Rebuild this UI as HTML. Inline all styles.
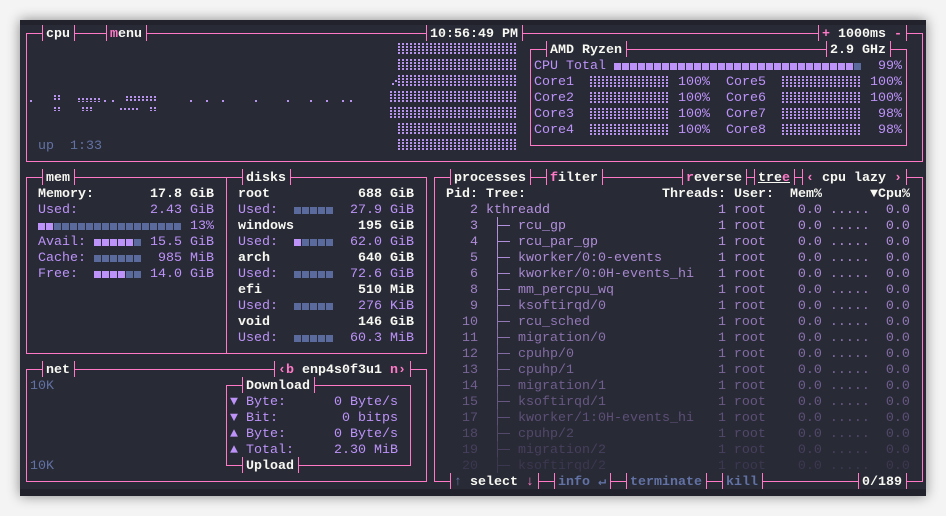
<!DOCTYPE html>
<html><head><meta charset="utf-8"><style>
*{margin:0;padding:0;box-sizing:border-box}
body{width:946px;height:516px;background:#f4f4f4;position:relative;overflow:hidden}
#t{position:absolute;left:20px;top:20px;width:906px;height:476px;background:#21222c;box-shadow:0 0 12px rgba(0,0,0,.45)}
#g{position:absolute;left:20px;top:25px;width:906px;height:464px;background:#282a36}
i{position:absolute;font-style:normal;white-space:pre;font-family:"Liberation Mono","DejaVu Sans Mono",monospace;font-size:13.33px;line-height:16px;height:16px;color:#bd93f9;transform:translateY(2px)}
.w{color:#f8f8f2;font-weight:bold}
.p{color:#ff79c6}
.d{color:#6272a4}
.bx{position:absolute;border:1px solid #ff79c6}
.lb{position:absolute;height:16px;border-left:1px solid #ff79c6;border-right:1px solid #ff79c6;background:#282a36;padding-left:3px;white-space:pre;font-family:"Liberation Mono","DejaVu Sans Mono",monospace;font-size:13.33px;line-height:20px;font-weight:bold;color:#f8f8f2}
.sq{position:absolute;height:12px}
.sq b{display:inline-block;width:7px;height:7px;margin-right:1px;background:#5b6a9c;vertical-align:top;margin-top:3px}
.sq b.v{background:#bd93f9}
.br{position:absolute;height:12px;background:linear-gradient(0deg,#282a36 1px,transparent 1px) 0 0/4px 3px,linear-gradient(90deg,#b893ee 2px,transparent 2px) 0 0/4px 3px}
.dt{position:absolute;width:2px;height:2px;background:#b893ee}
.vl{position:absolute;width:1px;height:16px}
.hl{position:absolute;height:1px;width:13px}
</style></head><body>
<div id="t"></div><div id="g"></div>

<!-- boxes -->
<div class="bx" style="left:26px;top:33px;width:897px;height:129px"></div>
<div class="bx" style="left:530px;top:49px;width:377px;height:97px"></div>
<div class="bx" style="left:26px;top:177px;width:401px;height:177px"></div>
<div style="position:absolute;left:226px;top:177px;width:1px;height:177px;background:#ff79c6"></div>
<div class="bx" style="left:434px;top:177px;width:489px;height:305px"></div>
<div class="bx" style="left:26px;top:369px;width:401px;height:113px"></div>
<div class="bx" style="left:226px;top:385px;width:185px;height:81px"></div>

<!-- labels -->
<div class="lb" style="left:42px;top:25px;width:33px">cpu</div>
<div class="lb" style="left:106px;top:25px;width:41px"><span class="p">m</span>enu</div>
<div class="lb" style="left:426px;top:25px;width:97px">10:56:49 PM</div>
<div class="lb" style="left:818px;top:25px;width:89px"><span class="p">+</span> 1000ms <span class="p">-</span></div>
<div class="lb" style="left:546px;top:41px;width:81px">AMD Ryzen</div>
<div class="lb" style="left:826px;top:41px;width:65px">2.9 GHz</div>
<div class="lb" style="left:42px;top:169px;width:33px">mem</div>
<div class="lb" style="left:242px;top:169px;width:49px">disks</div>
<div class="lb" style="left:450px;top:169px;width:81px">processes</div>
<div class="lb" style="left:546px;top:169px;width:57px"><span class="p">f</span>ilter</div>
<div class="lb" style="left:682px;top:169px;width:65px"><span class="p">r</span>everse</div>
<div class="lb" style="left:754px;top:169px;width:41px"><span style="text-decoration:underline">tre<span class="p">e</span></span></div>
<div class="lb" style="left:802px;top:169px;width:105px"><span class="p">‹</span> cpu lazy <span class="p">›</span></div>
<div class="lb" style="left:42px;top:361px;width:33px">net</div>
<div class="lb" style="left:274px;top:361px;width:137px"><span class="p">‹b</span> enp4s0f3u1 <span class="p">n›</span></div>
<div class="lb" style="left:242px;top:377px;width:73px">Download</div>
<div class="lb" style="left:242px;top:457px;width:57px">Upload</div>
<div class="lb" style="left:450px;top:473px;width:89px"><span class="d">↑</span> select <span class="p">↓</span></div>
<div class="lb" style="left:554px;top:473px;width:57px;color:#6272a4">info ↵</div>
<div class="lb" style="left:626px;top:473px;width:81px;color:#6272a4">terminate</div>
<div class="lb" style="left:722px;top:473px;width:41px;color:#6272a4">kill</div>
<div class="lb" style="left:858px;top:473px;width:49px">0/189</div>

<!-- cpu graph -->
<div class="br" style="left:398px;top:43px;width:120px"></div>
<div class="br" style="left:398px;top:59px;width:120px"></div>
<div class="dt" style="left:392px;top:83px"></div><div class="dt" style="left:395px;top:80px"></div>
<div class="br" style="left:398px;top:75px;width:120px"></div>
<div class="br" style="left:390px;top:91px;width:128px"></div>
<div class="br" style="left:390px;top:107px;width:128px"></div>
<div class="br" style="left:398px;top:123px;width:120px"></div>
<div class="br" style="left:398px;top:139px;width:120px"></div>
<div class="dt" style="left:30px;top:100px"></div>
<div class="br" style="left:54px;top:95px;width:8px;height:6px"></div>
<div class="br" style="left:54px;top:107px;width:6px;height:4px"></div>
<div class="br" style="left:78px;top:98px;width:24px;height:4px"></div>
<div class="dt" style="left:104px;top:100px"></div><div class="dt" style="left:112px;top:100px"></div>
<div class="br" style="left:126px;top:96px;width:30px;height:6px"></div>
<div class="br" style="left:82px;top:107px;width:10px;height:4px"></div>
<div class="br" style="left:120px;top:108px;width:20px;height:3px"></div>
<div class="br" style="left:150px;top:107px;width:6px;height:4px"></div>
<div class="dt" style="left:190px;top:100px"></div><div class="dt" style="left:206px;top:100px"></div><div class="dt" style="left:222px;top:100px"></div><div class="dt" style="left:255px;top:100px"></div><div class="dt" style="left:287px;top:100px"></div><div class="dt" style="left:310px;top:100px"></div><div class="dt" style="left:326px;top:100px"></div><div class="dt" style="left:342px;top:100px"></div><div class="dt" style="left:350px;top:100px"></div>
<i class="d" style="left:38px;top:137px">up  1:33</i>

<!-- ryzen -->
<i style="left:534px;top:57px">CPU Total</i>
<div class="sq" style="left:614px;top:60px"><b class="v"></b><b class="v"></b><b class="v"></b><b class="v"></b><b class="v"></b><b class="v"></b><b class="v"></b><b class="v"></b><b class="v"></b><b class="v"></b><b class="v"></b><b class="v"></b><b class="v"></b><b class="v"></b><b class="v"></b><b class="v"></b><b class="v"></b><b class="v"></b><b class="v"></b><b class="v"></b><b class="v"></b><b class="v"></b><b class="v"></b><b class="v"></b><b class="v"></b><b class="v"></b><b class="v"></b><b class="v"></b><b class="v"></b><b class="v"></b><b></b></div>
<i style="left:878px;top:57px">99%</i>
<i style="left:534px;top:73px">Core1</i><div class="br" style="left:590px;top:76px;width:80px"></div><i style="left:678px;top:73px">100%</i>
<i style="left:726px;top:73px">Core5</i><div class="br" style="left:782px;top:76px;width:80px"></div><i style="left:870px;top:73px">100%</i>
<i style="left:534px;top:89px">Core2</i><div class="br" style="left:590px;top:92px;width:80px"></div><i style="left:678px;top:89px">100%</i>
<i style="left:726px;top:89px">Core6</i><div class="br" style="left:782px;top:92px;width:80px"></div><i style="left:870px;top:89px">100%</i>
<i style="left:534px;top:105px">Core3</i><div class="br" style="left:590px;top:108px;width:80px"></div><i style="left:678px;top:105px">100%</i>
<i style="left:726px;top:105px">Core7</i><div class="br" style="left:782px;top:108px;width:80px"></div><i style="left:870px;top:105px"> 98%</i>
<i style="left:534px;top:121px">Core4</i><div class="br" style="left:590px;top:124px;width:80px"></div><i style="left:678px;top:121px">100%</i>
<i style="left:726px;top:121px">Core8</i><div class="br" style="left:782px;top:124px;width:80px"></div><i style="left:870px;top:121px"> 98%</i>

<!-- mem -->
<i class="w" style="left:38px;top:185px">Memory:       17.8 GiB</i>
<i style="left:38px;top:201px">Used:         2.43 GiB</i>
<div class="sq" style="left:38px;top:220px"><b class="v"></b><b class="v"></b><b></b><b></b><b></b><b></b><b></b><b></b><b></b><b></b><b></b><b></b><b></b><b></b><b></b><b></b><b></b><b></b></div>
<i style="left:190px;top:217px">13%</i>
<i style="left:38px;top:233px">Avail:</i><div class="sq" style="left:94px;top:236px"><b class="v"></b><b class="v"></b><b class="v"></b><b class="v"></b><b class="v"></b><b></b></div><i style="left:150px;top:233px">15.5 GiB</i>
<i style="left:38px;top:249px">Cache:</i><div class="sq" style="left:94px;top:252px"><b></b><b></b><b></b><b></b><b></b><b></b></div><i style="left:150px;top:249px"> 985 MiB</i>
<i style="left:38px;top:265px">Free:</i><div class="sq" style="left:94px;top:268px"><b class="v"></b><b class="v"></b><b class="v"></b><b class="v"></b><b></b><b></b></div><i style="left:150px;top:265px">14.0 GiB</i>

<!-- disks -->
<i class="w" style="left:238px;top:185px">root           688 GiB</i>
<i style="left:238px;top:201px">Used:</i><div class="sq" style="left:294px;top:204px"><b></b><b></b><b></b><b></b><b></b></div><i style="left:350px;top:201px">27.9 GiB</i>
<i class="w" style="left:238px;top:217px">windows        195 GiB</i>
<i style="left:238px;top:233px">Used:</i><div class="sq" style="left:294px;top:236px"><b class="v"></b><b></b><b></b><b></b><b></b></div><i style="left:350px;top:233px">62.0 GiB</i>
<i class="w" style="left:238px;top:249px">arch           640 GiB</i>
<i style="left:238px;top:265px">Used:</i><div class="sq" style="left:294px;top:268px"><b></b><b></b><b></b><b></b><b></b></div><i style="left:350px;top:265px">72.6 GiB</i>
<i class="w" style="left:238px;top:281px">efi            510 MiB</i>
<i style="left:238px;top:297px">Used:</i><div class="sq" style="left:294px;top:300px"><b></b><b></b><b></b><b></b><b></b></div><i style="left:350px;top:297px"> 276 KiB</i>
<i class="w" style="left:238px;top:313px">void           146 GiB</i>
<i style="left:238px;top:329px">Used:</i><div class="sq" style="left:294px;top:332px"><b></b><b></b><b></b><b></b><b></b></div><i style="left:350px;top:329px">60.3 MiB</i>

<!-- net -->
<i class="d" style="left:30px;top:377px">10K</i>
<i class="d" style="left:30px;top:457px">10K</i>
<i style="left:230px;top:393px">▼ Byte:      0 Byte/s</i>
<i style="left:230px;top:409px">▼ Bit:        0 bitps</i>
<i style="left:230px;top:425px">▲ Byte:      0 Byte/s</i>
<i style="left:230px;top:441px">▲ Total:     2.30 MiB</i>

<!-- processes -->
<i class="w" style="left:446px;top:185px">Pid: Tree:</i>
<i class="w" style="left:662px;top:185px">Threads: User:</i>
<i class="w" style="left:790px;top:185px">Mem%</i>
<i class="w" style="left:870px;top:185px">▼Cpu%</i>

<i style="left:446px;top:201px;color:#b692e0">   2 kthreadd                     1 root    0.0 .....  0.0</i>
<i style="left:446px;top:217px;color:#b491de">   3     rcu_gp                   1 root    0.0 .....  0.0</i>
<i style="left:446px;top:233px;color:#b18eda">   4     rcu_par_gp               1 root    0.0 .....  0.0</i>
<i style="left:446px;top:249px;color:#ac8bd4">   5     kworker/0:0-events       1 root    0.0 .....  0.0</i>
<i style="left:446px;top:265px;color:#a787ce">   6     kworker/0:0H-events_hi   1 root    0.0 .....  0.0</i>
<i style="left:446px;top:281px;color:#a182c7">   8     mm_percpu_wq             1 root    0.0 .....  0.0</i>
<i style="left:446px;top:297px;color:#9a7dbf">   9     ksoftirqd/0              1 root    0.0 .....  0.0</i>
<i style="left:446px;top:313px;color:#9378b6">  10     rcu_sched                1 root    0.0 .....  0.0</i>
<i style="left:446px;top:329px;color:#8b72ad">  11     migration/0              1 root    0.0 .....  0.0</i>
<i style="left:446px;top:345px;color:#836ca3">  12     cpuhp/0                  1 root    0.0 .....  0.0</i>
<i style="left:446px;top:361px;color:#7a6599">  13     cpuhp/1                  1 root    0.0 .....  0.0</i>
<i style="left:446px;top:377px;color:#705e8e">  14     migration/1              1 root    0.0 .....  0.0</i>
<i style="left:446px;top:393px;color:#675782">  15     ksoftirqd/1              1 root    0.0 .....  0.0</i>
<i style="left:446px;top:409px;color:#5d4f77">  17     kworker/1:0H-events_hi   1 root    0.0 .....  0.0</i>
<i style="left:446px;top:425px;color:#52486a">  18     cpuhp/2                  1 root    0.0 .....  0.0</i>
<i style="left:446px;top:441px;color:#473f5d">  19     migration/2              1 root    0.0 .....  0.0</i>
<i style="left:446px;top:457px;color:#3c3750">  20     ksoftirqd/2              1 root    0.0 .....  0.0</i>

<!-- tree lines -->
<div class="vl" style="left:497px;top:217px;background:#b491de"></div><div class="hl" style="left:497px;top:225px;background:#b491de"></div>
<div class="vl" style="left:497px;top:233px;background:#b18eda"></div><div class="hl" style="left:497px;top:241px;background:#b18eda"></div>
<div class="vl" style="left:497px;top:249px;background:#ac8bd4"></div><div class="hl" style="left:497px;top:257px;background:#ac8bd4"></div>
<div class="vl" style="left:497px;top:265px;background:#a787ce"></div><div class="hl" style="left:497px;top:273px;background:#a787ce"></div>
<div class="vl" style="left:497px;top:281px;background:#a182c7"></div><div class="hl" style="left:497px;top:289px;background:#a182c7"></div>
<div class="vl" style="left:497px;top:297px;background:#9a7dbf"></div><div class="hl" style="left:497px;top:305px;background:#9a7dbf"></div>
<div class="vl" style="left:497px;top:313px;background:#9378b6"></div><div class="hl" style="left:497px;top:321px;background:#9378b6"></div>
<div class="vl" style="left:497px;top:329px;background:#8b72ad"></div><div class="hl" style="left:497px;top:337px;background:#8b72ad"></div>
<div class="vl" style="left:497px;top:345px;background:#836ca3"></div><div class="hl" style="left:497px;top:353px;background:#836ca3"></div>
<div class="vl" style="left:497px;top:361px;background:#7a6599"></div><div class="hl" style="left:497px;top:369px;background:#7a6599"></div>
<div class="vl" style="left:497px;top:377px;background:#705e8e"></div><div class="hl" style="left:497px;top:385px;background:#705e8e"></div>
<div class="vl" style="left:497px;top:393px;background:#675782"></div><div class="hl" style="left:497px;top:401px;background:#675782"></div>
<div class="vl" style="left:497px;top:409px;background:#5d4f77"></div><div class="hl" style="left:497px;top:417px;background:#5d4f77"></div>
<div class="vl" style="left:497px;top:425px;background:#52486a"></div><div class="hl" style="left:497px;top:433px;background:#52486a"></div>
<div class="vl" style="left:497px;top:441px;background:#473f5d"></div><div class="hl" style="left:497px;top:449px;background:#473f5d"></div>
<div class="vl" style="left:497px;top:457px;background:#3c3750"></div><div class="hl" style="left:497px;top:465px;background:#3c3750"></div>
</body></html>
